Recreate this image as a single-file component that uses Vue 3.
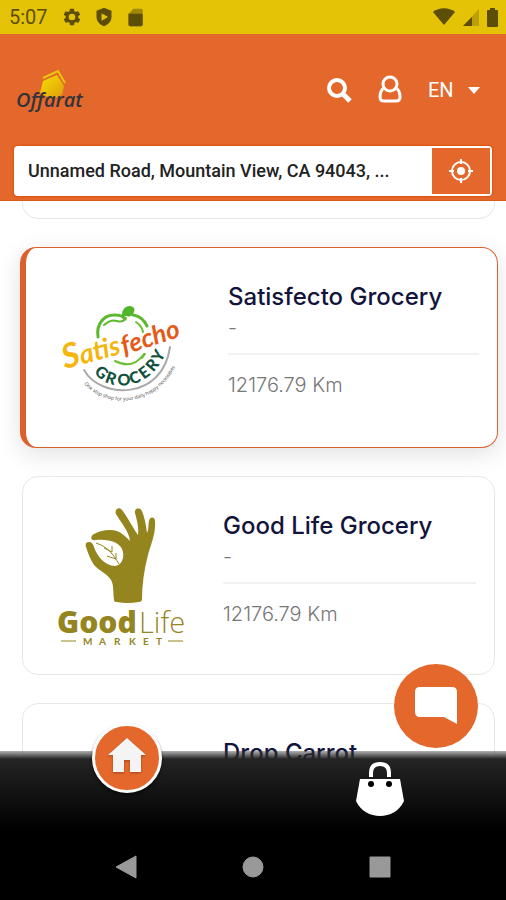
<template>
  <div class="app">
    <!-- status bar -->
    <div class="status-bar">
      <span class="clock">5:07</span>
      <svg class="status-icon" viewBox="0 0 24 24">
        <path fill-rule="evenodd" d="M19.4 13a7.500 7.500 0 0 0 0-2l2.100-1.600a.5.5 0 0 0 .1-.6l-2-3.500a.5.5 0 0 0-.6-.2l-2.500 1a7.300 7.300 0 0 0-1.700-1L14.400 2.400a.5.5 0 0 0-.5-.4h-4a.5.5 0 0 0-.5.4L9 5.100a7.300 7.300 0 0 0-1.700 1l-2.500-1a.5.5 0 0 0-.6.200l-2 3.500a.5.5 0 0 0 .1.600L4.500 11a7.500 7.500 0 0 0 0 2l-2.100 1.600a.5.5 0 0 0-.1.600l2 3.500c.1.200.4.300.6.200l2.500-1a7.300 7.300 0 0 0 1.700 1l.4 2.700c0 .2.200.4.500.4h4c.3 0 .5-.2.5-.4l.4-2.700a7.300 7.300 0 0 0 1.700-1l2.500 1c.2.100.5 0 .6-.2l2-3.500a.5.5 0 0 0-.1-.6zM12 16a4 4 0 1 1 0-8 4 4 0 0 1 0 8z" />
      </svg>
      <svg class="status-icon" viewBox="0 0 24 24">
        <path fill-rule="evenodd" d="M12 1 3 4.500V12c0 5 3.800 9.300 9 11 5.200-1.700 9-6 9-11V4.500zM9 7.500l8 4.500-8 4.500z" />
      </svg>
      <svg class="status-icon" viewBox="0 0 24 24">
        <path d="M9 2h9a2 2 0 0 1 2 2v17a2 2 0 0 1-2 2H5a2 2 0 0 1-2-2V8z" opacity=".5" />
        <path d="M3 8h17v13a2 2 0 0 1-2 2H5a2 2 0 0 1-2-2z" />
      </svg>
      <div class="status-right">
        <svg width="22" height="18" viewBox="0 0 22 18">
          <path d="M0 4C6-1 16-1 22 4L11 17z" />
        </svg>
        <svg width="16" height="17" viewBox="0 0 16 17">
          <path d="M0 17 16 0v17z" opacity=".3" />
          <path d="M0 17 9 8v9z" />
        </svg>
        <svg width="11" height="19" viewBox="0 0 11 19">
          <path d="M3 0h5v2h2q1 0 1 1v15q0 1-1 1H1q-1 0-1-1V3q0-1 1-1h2z" />
        </svg>
      </div>
    </div>

    <!-- header -->
    <header class="header">
      <div class="header-row">
        <a class="brand" href="#" aria-label="Offarat">
          <svg width="74" height="48" viewBox="-2 -3 74 48">
            <defs>
              <linearGradient id="tag" x1="0" y1="0" x2="1" y2="1">
                <stop offset="0" stop-color="#f6e000" />
                <stop offset="1" stop-color="#e09a10" />
              </linearGradient>
            </defs>
            <path d="M27 12 41 6l7 11-2 9-10 4-12-6z" fill="url(#tag)" />
            <path d="M27 9 42 2l7 12" fill="none" stroke="#e8c808" stroke-width="2" />
            <text x="0" y="38" class="brand-text">Offarat</text>
          </svg>
        </a>
        <div class="header-actions">
          <button class="icon-button" type="button" aria-label="Search">
            <svg width="26" height="26" viewBox="0 0 26 26" fill="none" stroke="#fff">
              <circle cx="11" cy="11" r="8" stroke-width="4" />
              <path d="m17 17 7 7" stroke-width="5" />
            </svg>
          </button>
          <button class="icon-button" type="button" aria-label="Account">
            <svg width="24" height="28" viewBox="0 0 24 28" fill="none" stroke="#fff" stroke-width="3">
              <circle cx="12" cy="8" r="7" />
              <path d="M6 12c-3 2-4 6-4 9q0 4 4 4h12q4 0 4-4c0-3-1-7-4-9" />
            </svg>
          </button>
          <div class="language">
            <select v-model="language" aria-label="Language">
              <option v-for="item in languages" :key="item">{{ item }}</option>
            </select>
            <svg width="12" height="7" viewBox="0 0 12 7"><path d="M0 0h12L6 7z" fill="#fff" /></svg>
          </div>
        </div>
      </div>

      <div class="address-bar">
        <input v-model="address" type="text" aria-label="Address" />
        <button class="locate-button" type="button" aria-label="Locate me">
          <svg width="24" height="24" viewBox="0 0 24 24" fill="none" stroke="#fff">
            <circle cx="12" cy="12" r="9" stroke-width="2" />
            <path d="M12 0v5M12 19v5M0 12h5M19 12h5" stroke-width="2" />
            <circle cx="12" cy="12" r="4" fill="#fff" stroke="none" />
          </svg>
        </button>
      </div>
    </header>

    <!-- store list -->
    <main class="store-list">
      <div class="card card-end"></div>
      <article
        v-for="store in stores"
        :key="store.name"
        class="card"
        :class="{ active: store.active }"
      >
        <div class="card-logo">
          <svg v-if="store.logo === 'satisfecho'" width="135" height="108" viewBox="0 0 135 108">
            <g fill="none" stroke-linecap="round">
              <path d="M42 37C40 24 48 14 60 15q6 0 9 4" stroke="#5cb82c" stroke-width="3" />
              <path d="M48 25q7-6 13-4 6 2 9-3" stroke="#5cb82c" stroke-width="2" />
              <path d="M77 15q9 1 14 11" stroke="#5cb82c" stroke-width="3" />
              <path d="M80 22q6 4 7 10M59 61q18 9 29-7M86 58l3-4" stroke="#6cc030" stroke-width="2" />
              <path d="M28 70C45 100 107 100 114 47" stroke="#aaa" stroke-width="2" />
            </g>
            <path d="M66 14q1-8 8-8 6 1 4 6-3 6-7 4-4 0-5 2z" fill="#4fb52a" />
            <text transform="translate(9 69) rotate(-15)" class="satis"><tspan class="satis-cap">S</tspan>atis</text>
            <text transform="translate(68 55) rotate(-18)" class="fecho">fecho</text>
            <path id="groceryArc" d="M38 72C52 93 96 93 112 48" fill="none" />
            <text class="grocery" x="0 14 28 42 55 67 79"><textPath href="#groceryArc">GROCERY</textPath></text>
            <path id="sloganArc" d="M28 84C50 108 97 109 119 67" fill="none" />
            <text class="slogan"><textPath href="#sloganArc">One stop shop for your daily happy necessities</textPath></text>
          </svg>

          <svg v-if="store.logo === 'goodlife'" width="140" height="150" viewBox="0 0 140 150">
            <path
              fill="#95851f"
              d="M61 99c-1-8 0-15-3-20-3-6-12-9-17-15-4-6-6-12-8-18-1-3 0-5 3-5 3 0 4 2 5 5 3 9 11 19 21 19 7-1 9-8 8-14-2-9-12-13-27-12-6 1-6-4-2-6 7-4 16-5 23-3 5 2 9 6 13 10-1-10-9-18-14-27-2-4 3-8 6-4 6 8 11 18 16 25 1-7-1-15-3-22-1-5 5-6 7-2 3 7 4 15 5 22 2-4 1-8 2-12 1-5 6-4 6 0 1 12-4 23-7 34-4 15-6 30-6 44q0 3-3 3-12 2-22 0-3 0-3-2z"
            />
            <path d="M43 42c12 4 17 11 23 21M51 47l8 4V45M54 55l9 3v-6" fill="none" stroke="#95851f" />
            <text x="4" y="132" class="good">Good</text>
            <text x="86" y="132" class="life">Life</text>
            <path d="M8 140h15M115 140h15" stroke="#95851f" />
            <text x="30 46 61 76 90 103" y="144" class="market">MARKET</text>
          </svg>
        </div>
        <div class="card-body">
          <h2>{{ store.name }}</h2>
          <p class="subtitle">-</p>
          <p class="distance">{{ store.distance }}</p>
        </div>
      </article>
    </main>

    <button class="chat-button" type="button" aria-label="Chat">
      <svg width="44" height="38" viewBox="0 0 44 38">
        <path d="M6 0h32q5 0 5 5v32l-13-7H6q-5 0-5-5V5q0-5 5-5z" fill="#fff" />
      </svg>
    </button>

    <!-- bottom bar -->
    <footer class="bottom">
      <nav class="tabs">
        <a class="tab-home" href="#" aria-label="Home">
          <svg width="38" height="34" viewBox="0 0 38 34">
            <path d="M19 0 38 17h-5v17H22V22h-6v12H5V17H0z" fill="#f4f4f4" />
          </svg>
        </a>
        <a class="tab-bag" href="#" aria-label="Bag">
          <svg width="50" height="54" viewBox="0 0 50 54">
            <path d="M16 15v-4q0-9 9-9t9 9v4" fill="none" stroke="#fff" stroke-width="4" />
            <path d="M5 17h40l4 22c-9 20-39 20-48 0z" fill="#fff" />
            <circle cx="16" cy="22" r="3" />
            <circle cx="34" cy="22" r="3" />
          </svg>
        </a>
      </nav>
      <div class="system-nav">
        <button type="button" aria-label="Back">
          <svg width="22" height="24" viewBox="0 0 22 24"><path d="M21 1v22L1 12z" stroke-linejoin="round" /></svg>
        </button>
        <button type="button" aria-label="System home">
          <svg width="22" height="22" viewBox="0 0 22 22"><circle cx="11" cy="11" r="10" /></svg>
        </button>
        <button type="button" aria-label="Recent apps">
          <svg width="22" height="22" viewBox="0 0 22 22"><path d="M1 1h20v20H1z" stroke-linejoin="round" /></svg>
        </button>
      </div>
    </footer>
  </div>
</template>

<script setup>
import { ref } from 'vue'

const language = ref('EN')
const languages = ['EN', 'AR']
const address = ref('Unnamed Road, Mountain View, CA 94043, ...')

const stores = [
  { name: 'Satisfecto Grocery', distance: '12176.79 Km', logo: 'satisfecho', active: true },
  { name: 'Good Life Grocery', distance: '12176.79 Km', logo: 'goodlife' },
  { name: 'Drop Carrot', distance: '12176.79 Km' }
]
</script>

<style>
body {
  margin: 0;
  background-color: #fff;
}
</style>

<style scoped>
.app {
  height: 100vh;
  display: flex;
  flex-direction: column;
  overflow: hidden;
  font-family: Roboto, "Liberation Sans", sans-serif;
}

.app * {
  box-sizing: border-box;
}

svg {
  display: block;
  overflow: visible;
}

button {
  border: none;
  background: none;
  padding: 0;
  display: flex;
  align-items: center;
  justify-content: center;
  cursor: pointer;
}

.status-bar {
  flex-shrink: 0;
  height: 34px;
  padding: 0 8px 0 9px;
  display: flex;
  align-items: center;
  gap: 12px;
  background-color: #e4c206;
  color: #5c4e06;
  fill: #5c4e06;
}

.clock {
  font-size: 20px;
  margin-right: 2px;
}

.status-icon {
  width: 20px;
  height: 20px;
}

.status-right {
  margin-left: auto;
  display: flex;
  align-items: center;
  gap: 8px;
}

.header {
  flex-shrink: 0;
  padding: 0 14px 4px;
  background-color: #e4672c;
  border-bottom: 1px solid #dc5a1c;
}

.header-row {
  height: 112px;
  display: flex;
  align-items: center;
  justify-content: space-between;
}

.brand-text {
  font-family: "Open Sans", sans-serif;
  font-size: 20px;
  font-style: italic;
  font-weight: 600;
  fill: #33343a;
}

.header-actions {
  display: flex;
  align-items: center;
  gap: 26px;
}

.language {
  position: relative;
  display: flex;
  align-items: center;
}

.language select {
  appearance: none;
  width: 64px;
  border: none;
  padding: 0;
  background: none;
  color: #fff;
  font-family: inherit;
  font-size: 20px;
}

.language svg {
  position: absolute;
  right: 12px;
  pointer-events: none;
}

.address-bar {
  height: 50px;
  display: flex;
  border: 2px solid #fff;
  border-radius: 4px;
  background-color: #fff;
  box-shadow: 0 0 2px 1px #dc520f;
}

.address-bar input {
  flex: 1;
  min-width: 0;
  border: none;
  outline: none;
  padding: 0 12px 2px;
  background: none;
  color: #222;
  font-family: inherit;
  font-size: 18px;
  font-weight: 500;
}

.locate-button {
  width: 58px;
  background-color: #e4672c;
}

.store-list {
  flex: 1;
  min-height: 0;
  overflow: hidden;
  padding: 0 11px 0 22px;
  display: flex;
  flex-direction: column;
  gap: 28px;
}

.card {
  flex-shrink: 0;
  height: 199px;
  display: flex;
  padding-right: 18px;
  border: 1px solid #e8e8e8;
  border-radius: 16px;
  background-color: #fff;
}

/* tail of the card scrolled under the header */
.card-end {
  height: 18px;
  border-top: none;
  border-radius: 0 0 16px 16px;
}

.card.active {
  height: 201px;
  margin: 0 -3px 0 -2px;
  border-color: #dc602c;
  border-left-width: 6px;
  box-shadow: 0 6px 24px rgba(0, 0, 0, 0.12);
}

.card-logo {
  width: 200px;
  flex-shrink: 0;
  display: flex;
  align-items: center;
  justify-content: center;
}

.card.active .card-logo {
  width: 202px;
  padding-top: 12px;
  padding-right: 8px;
}

.card-body {
  flex: 1;
  min-width: 0;
  padding-top: 32px;
  font-family: Inter, "Open Sans", sans-serif;
}

.card-body h2 {
  margin: 0;
  font-size: 24px;
  line-height: 34px;
  font-weight: 500;
  color: #12143c;
}

.card-body p {
  margin: 0;
  font-size: 20px;
  font-weight: 300;
  color: #777;
}

.card-body .subtitle {
  line-height: 28px;
  padding-bottom: 11px;
  border-bottom: 2px solid #f2f2f2;
}

.card-body .distance {
  padding-top: 16px;
  line-height: 28px;
}

.satis,
.fecho {
  font-family: Lato, sans-serif;
  font-style: italic;
  font-weight: 700;
}

.satis {
  font-size: 27px;
  fill: #f4b60c;
}

.satis-cap {
  font-size: 34px;
}

.fecho {
  font-size: 26px;
  fill: #e65a18;
}

.grocery {
  font-family: Lato, sans-serif;
  font-size: 16px;
  font-weight: 900;
  fill: #10503c;
}

.slogan {
  font-family: "Open Sans", sans-serif;
  font-size: 5px;
  fill: #444;
}

.good,
.life {
  font-family: "Open Sans", sans-serif;
  fill: #95851f;
}

.good {
  font-size: 30px;
  font-weight: 800;
}

.life {
  font-size: 29px;
  font-weight: 300;
}

.market {
  font-family: Lato, sans-serif;
  font-size: 10px;
  font-weight: 700;
  fill: #95851f;
}

.chat-button {
  position: fixed;
  right: 28px;
  bottom: 152px;
  width: 84px;
  height: 84px;
  border-radius: 50%;
  background-color: #e4672c;
}

.bottom {
  position: fixed;
  left: 0;
  right: 0;
  bottom: 0;
  background: linear-gradient(rgba(60, 60, 60, 0.4), #242424 8px, #000 78px);
}

.tabs {
  height: 82px;
  display: grid;
  grid-template-columns: 1fr 1fr;
  justify-items: center;
}

.tab-home {
  width: 70px;
  height: 70px;
  margin-top: -28px;
  display: flex;
  align-items: center;
  justify-content: center;
  border: 3px solid #fff;
  border-radius: 50%;
  background-color: #e4672c;
  box-shadow: 0 2px 3px rgba(0, 0, 0, 0.6);
}

.tab-home svg {
  margin-bottom: 6px;
  filter: drop-shadow(0 1px 1px rgba(0, 0, 0, 0.3));
}

.tab-bag {
  padding-top: 11px;
}

.system-nav {
  height: 67px;
  padding: 0 63px;
  display: grid;
  grid-template-columns: repeat(3, 1fr);
}

.system-nav svg {
  fill: #999;
  stroke: #999;
}
</style>
